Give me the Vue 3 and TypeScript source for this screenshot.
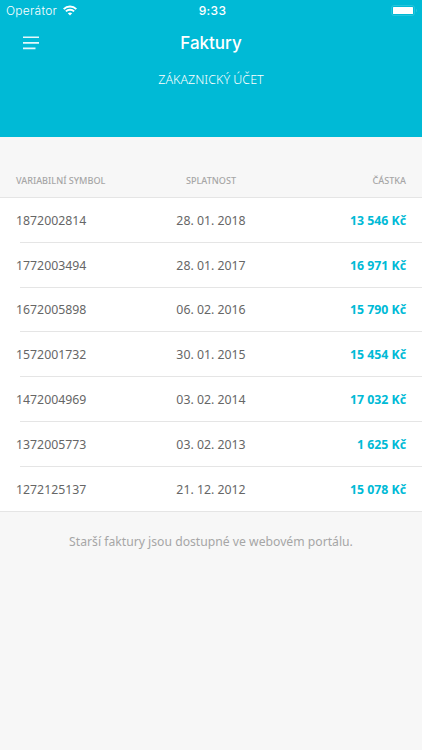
<script setup lang="ts">
interface Invoice {
  symbol: string
  due: string
  amount: string
}

const invoices: Invoice[] = [
  { symbol: '1872002814', due: '28. 01. 2018', amount: '13 546 Kč' },
  { symbol: '1772003494', due: '28. 01. 2017', amount: '16 971 Kč' },
  { symbol: '1672005898', due: '06. 02. 2016', amount: '15 790 Kč' },
  { symbol: '1572001732', due: '30. 01. 2015', amount: '15 454 Kč' },
  { symbol: '1472004969', due: '03. 02. 2014', amount: '17 032 Kč' },
  { symbol: '1372005773', due: '03. 02. 2013', amount: '1 625 Kč' },
  { symbol: '1272125137', due: '21. 12. 2012', amount: '15 078 Kč' },
]
</script>

<template>
  <div class="screen">
    <header class="header">
      <div class="status">
        <div class="carrier">
          <span>Operátor</span>
          <svg class="wifi" viewBox="0 0 14 11" width="14" height="11">
            <g fill="none" stroke="#fff" stroke-width="2">
              <path d="M0.7 4.1C4.2 .6 9.8 .6 13.3 4.1" />
              <path d="M2.9 6.4C5.2 4.2 8.8 4.2 11.1 6.4" />
            </g>
            <path d="M4.8 8.2C6.1 7.1 7.9 7.1 9.2 8.2L7 10.5Z" fill="#fff" />
          </svg>
        </div>
        <div class="time">9:33</div>
        <svg class="battery" viewBox="0 0 27 11" width="27" height="11">
          <rect x=".5" y=".5" width="23" height="10" rx="2.5" fill="none" stroke="#fff" stroke-opacity=".15" />
          <rect x="2" y="2" width="20" height="7" rx=".5" fill="#fff" />
          <path d="M25 3.7C26.3 4.2 26.3 6.8 25 7.3Z" fill="#fff" fill-opacity=".15" />
        </svg>
      </div>
      <div class="nav">
        <svg class="menu" viewBox="0 0 16 14" width="16" height="14">
          <path d="M0 1.2H16M0 6.9H16M0 12.4H12.5" stroke="#fff" stroke-opacity=".9" stroke-width="1.6" />
        </svg>
        <h1 class="title">Faktury</h1>
      </div>
      <div class="subtitle">ZÁKAZNICKÝ ÚČET</div>
    </header>
    <div class="columns">
      <span>VARIABILNÍ SYMBOL</span>
      <span class="center">SPLATNOST</span>
      <span class="right">ČÁSTKA</span>
    </div>
    <ul class="list">
      <li v-for="invoice in invoices" :key="invoice.symbol" class="row">
        <span>{{ invoice.symbol }}</span>
        <span class="center">{{ invoice.due }}</span>
        <span class="right amount">{{ invoice.amount }}</span>
      </li>
    </ul>
    <p class="note">Starší faktury jsou dostupné ve webovém portálu.</p>
  </div>
</template>

<style>
body {
  margin: 0;
  background: #f7f7f7;
}
</style>

<style scoped>
.screen {
  width: 422px;
  height: 750px;
  overflow: hidden;
  background: #f7f7f7;
  font-family: "Noto Sans", "Open Sans", sans-serif;
  color: #666;
}
.header {
  box-sizing: border-box;
  height: 137px;
  background: #00bad6;
  color: #fff;
}
.status {
  display: grid;
  grid-template-columns: 1fr auto 1fr;
  align-items: center;
  height: 21px;
  padding: 0 4px 0 6px;
  font-family: Inter, sans-serif;
  font-size: 12px;
}
.carrier {
  display: flex;
  align-items: center;
  gap: 6px;
  font-weight: 300;
  letter-spacing: 0.25px;
}
.time {
  padding-left: 1px;
  font-weight: 500;
  letter-spacing: 0.3px;
}
.battery {
  justify-self: end;
}
.nav {
  display: grid;
  grid-template-columns: 1fr auto 1fr;
  align-items: center;
  height: 43px;
  padding: 0 23px;
}
.title {
  margin: 0;
  font-family: Inter, sans-serif;
  font-size: 17px;
  line-height: 24px;
  font-weight: 500;
}
.subtitle {
  margin-top: 7px;
  text-align: center;
  font-size: 12.5px;
  line-height: 17px;
  font-weight: 300;
}
.columns,
.row {
  display: grid;
  grid-template-columns: 1fr 1fr 1fr;
  align-items: center;
  padding: 0 16px;
}
.columns {
  box-sizing: border-box;
  height: 60px;
  padding-top: 26px;
  font-size: 9.1px;
  font-weight: 500;
  color: #a6a6a6;
}
.list {
  margin: 0;
  padding: 0;
  list-style: none;
  background: #fff;
  border-top: 1px solid #e5e5e5;
  border-bottom: 1px solid #e5e5e5;
}
.row {
  box-sizing: border-box;
  height: 44.8px;
  font-size: 12.3px;
  background: linear-gradient(#e5e5e5, #e5e5e5) 20px 100% / 100% 1px no-repeat;
}
.row:last-child {
  height: 44.4px;
  padding-top: 0.6px;
  background: none;
}
.center {
  text-align: center;
}
.right {
  text-align: right;
}
.amount {
  color: #00bad6;
  font-weight: 700;
}
.note {
  margin: 20px 0 0;
  text-align: center;
  font-size: 12.2px;
  line-height: 20px;
  color: #a6a6a6;
}
</style>
